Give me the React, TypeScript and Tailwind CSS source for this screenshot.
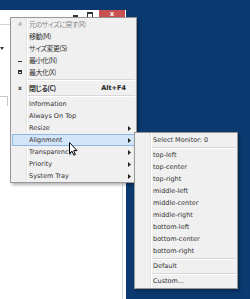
import clsx from 'clsx';

type Entry =
  | { sep: true }
  | {
      sep?: false;
      label: string;
      icon?: React.ReactNode;
      shortcut?: string;
      arrow?: boolean;
      disabled?: boolean;
      bold?: boolean;
      active?: boolean;
      jp?: boolean;
    };

const mainItems: Entry[] = [
  { label: '元のサイズに戻す(R)', jp: true, icon: <span className="text-[6px] leading-none text-[#9c9c9c]">#</span>, disabled: true },
  { label: '移動(M)', jp: true },
  { label: 'サイズ変更(S)', jp: true },
  { label: '最小化(N)', jp: true, icon: <span className="mt-[3px] block h-[1.5px] w-[4px] bg-[#333]" /> },
  { label: '最大化(X)', jp: true, icon: <span className="block h-[4px] w-[4px] border border-t-2 border-[#333]" /> },
  { sep: true },
  { label: '閉じる(C)', jp: true, bold: true, shortcut: 'Alt+F4', icon: <span className="text-[6px] font-bold leading-none text-[#333]">x</span> },
  { sep: true },
  { label: 'Information' },
  { label: 'Always On Top' },
  { label: 'Resize', arrow: true },
  { label: 'Alignment', arrow: true, active: true },
  { label: 'Transparency', arrow: true },
  { label: 'Priority', arrow: true },
  { label: 'System Tray', arrow: true },
];

const alignItems: Entry[] = [
  { label: 'Select Monitor: 0' },
  { sep: true },
  { label: 'top-left' },
  { label: 'top-center' },
  { label: 'top-right' },
  { label: 'middle-left' },
  { label: 'middle-center' },
  { label: 'middle-right' },
  { label: 'bottom-left' },
  { label: 'bottom-center' },
  { label: 'bottom-right' },
  { sep: true },
  { label: 'Default' },
  { sep: true },
  { label: 'Custom...' },
];

function Menu({ items, sepHeight, className }: { items: Entry[]; sepHeight: string; className: string }) {
  return (
    <div
      className={clsx(
        'absolute border border-[#979797] bg-[#f0f0f0] shadow-[2px_2px_3px_rgba(0,0,0,0.3)]',
        className,
      )}
    >
      <div className="absolute inset-y-0 left-[15px] w-px bg-[#e2e3e3]" />
      <div className="absolute inset-y-0 left-[16px] w-px bg-white" />
      {items.map((item, i) =>
        item.sep ? (
          <div key={i} className={clsx('relative flex items-center pl-[17px] pr-[1px]', sepHeight)}>
            <div className="h-[2px] w-full border-t border-b border-t-[#d7d7d7] border-b-white" />
          </div>
        ) : (
          <div
            key={i}
            className={clsx(
              'relative mx-[1px] flex h-[12px] items-center border',
              item.active ? 'border-[#8db8e6] bg-[#d3e5f8]' : 'border-transparent',
            )}
          >
            <span className="flex w-[14px] justify-center">{item.icon}</span>
            <span
              className={clsx(
                'ml-[2px] flex-1 whitespace-nowrap',
                item.disabled ? 'text-[#8a8a8a]' : 'text-[#333]',
                item.bold && 'font-bold text-[#222]',
                item.jp && "font-['Noto_Sans_CJK_JP','DejaVu_Sans',sans-serif] text-[7px] tracking-[-0.5px] [font-feature-settings:'palt'_1]",
              )}
            >
              {item.label}
            </span>
            {item.shortcut && <span className="font-bold text-[#222]">{item.shortcut}</span>}
            <span className="flex w-[8px] pl-[2px]">
              {item.arrow && (
                <svg width="3" height="5" viewBox="0 0 3 5">
                  <path d="M0 0L3 2.5L0 5Z" fill="#222" />
                </svg>
              )}
            </span>
          </div>
        ),
      )}
    </div>
  );
}

export default function App() {
  return (
    <div className="relative h-[299px] w-[250px] overflow-hidden bg-[#0b3a71] font-['DejaVu_Sans','Noto_Sans_CJK_JP',sans-serif] text-[6.5px] leading-[12px]">
      {/* background window */}
      <div className="mt-[10px] h-[289px] w-[126px] bg-white">
        <div className="flex h-[10px] items-start justify-end">
          <span className="mr-[9px] mt-[5px] h-[2px] w-[5px] bg-[#333]" />
          <span className="mr-[6px] mt-[2px] h-[6px] w-[6px] border border-t-2 border-[#333]" />
          <div className="mr-[1px] flex h-[9px] w-[26px] items-center justify-center bg-[#c75050] text-[7px] font-bold leading-none text-white">
            x
          </div>
        </div>
        <div className="h-[279px] w-[123px] border-r border-[#dcdcdc]">
          <div className="h-[5px] border-b border-[#d5d5d5]" />
          <div className="mt-[22px] h-[3px]">
            <svg width="4" height="3" viewBox="0 0 4 3">
              <path d="M0 0H4L2 3Z" fill="#333" />
            </svg>
          </div>
          <div className="mt-[46px] h-[10px] w-[8px] border-t border-r border-[#c8c8c8]" />
        </div>
      </div>

      <Menu items={mainItems} sepHeight="h-[4px]" className="left-[10px] top-[17px] w-[127px]" />
      <Menu items={alignItems} sepHeight="h-[3px]" className="left-[134px] top-[132px] w-[104px] py-[1px]" />

      {/* mouse cursor */}
      <svg className="absolute left-[69px] top-[142px]" width="9" height="14" viewBox="0 0 9 14">
        <path d="M0.5 0.5V11.5L3 9.2L4.8 13.2L6.4 12.5L4.7 8.6H8Z" fill="white" stroke="black" strokeWidth="1" strokeLinejoin="round" />
      </svg>
    </div>
  );
}
